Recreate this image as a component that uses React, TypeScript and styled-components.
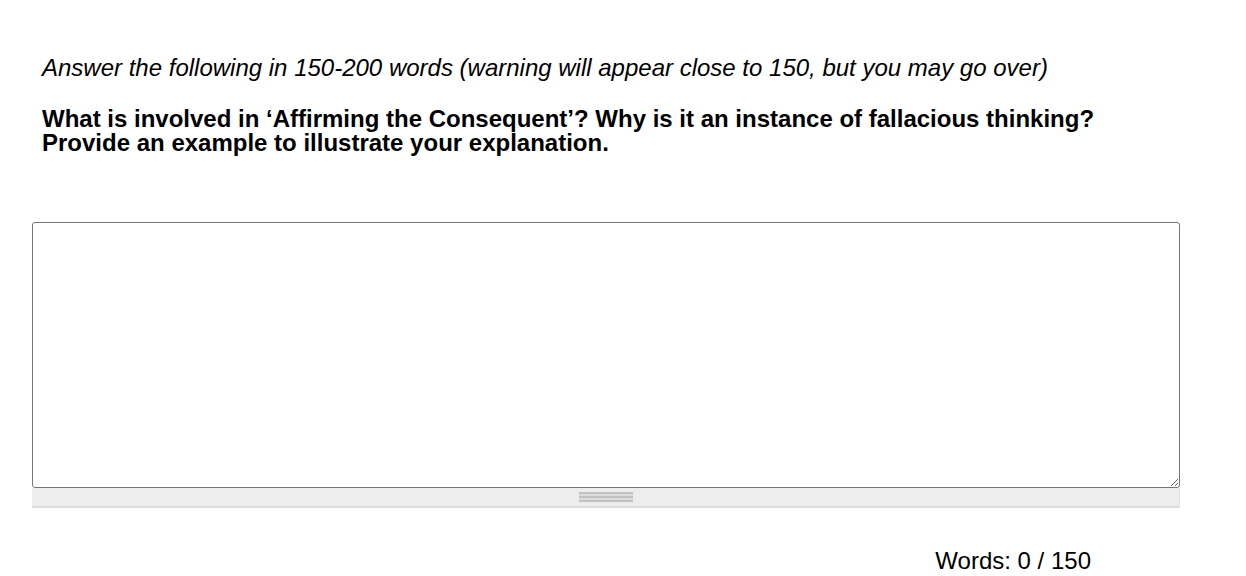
import React from "react";
import styled, { createGlobalStyle } from "styled-components";

const Global = createGlobalStyle`
  html, body { margin: 0; padding: 0; background: #fff; }
  body { font-family: "Liberation Sans", Arial, Helvetica, sans-serif; color: #000; }
`;

const Page = styled.div`
  width: 1246px;
  height: 576px;
  box-sizing: border-box;
  padding: 56px 0 0 32px;
  display: flex;
  flex-direction: column;
`;

const Prompt = styled.p`
  margin: 0 0 0 10px;
  font-size: 24px;
  line-height: 24px;
  font-style: italic;
`;

const Question = styled.p`
  margin: 27px 0 0 10px;
  font-size: 24px;
  line-height: 24px;
  font-weight: bold;
`;

const Editor = styled.div`
  margin-top: 67px;
  width: 1148px;
  display: flex;
  flex-direction: column;
`;

const Area = styled.textarea`
  display: block;
  box-sizing: border-box;
  width: 1148px;
  height: 266px;
  margin: 0;
  border: 1px solid #767676;
  border-radius: 3px;
  resize: vertical;
  font: 16px "Liberation Sans", Arial, sans-serif;
  outline: none;
`;

const StatusBar = styled.div`
  height: 20px;
  box-sizing: border-box;
  background: #ededed;
  border-bottom: 2px solid #dedede;
  border-right: 1px solid #e2e2e2;
  display: flex;
  justify-content: center;
  align-items: center;
`;

const Grip = styled.div`
  width: 54px;
  display: flex;
  flex-direction: column;
  gap: 2px;
  background: #dcdcdc;
`;

const GripLine = styled.div`
  height: 2px;
  background: #c2c2c2;
`;

const Counter = styled.div`
  align-self: flex-end;
  margin: 41px 155px 0 0;
  font-size: 24px;
  line-height: 24px;
`;

export default function App() {
  return (
    <>
      <Global />
      <Page>
        <Prompt>
          Answer the following in 150-200 words (warning will appear close to 150, but you may go over)
        </Prompt>
        <Question>
          What is involved in ‘Affirming the Consequent’? Why is it an instance of fallacious thinking?
          <br />
          Provide an example to illustrate your explanation.
        </Question>
        <Editor>
          <Area />
          <StatusBar>
            <Grip>
              <GripLine />
              <GripLine />
              <GripLine />
            </Grip>
          </StatusBar>
        </Editor>
        <Counter>Words: 0 / 150</Counter>
      </Page>
    </>
  );
}
